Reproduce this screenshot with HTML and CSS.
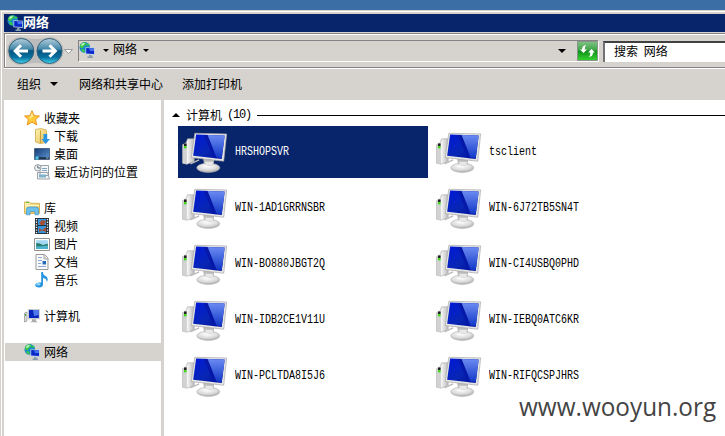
FILE: index.html
```
<!DOCTYPE html>
<html lang="zh-CN">
<head>
<meta charset="utf-8">
<title>网络</title>
<link rel="stylesheet" href="styles.css">
</head>
<body>
<svg class="defs" width="0" height="0">
  <defs>
    <linearGradient id="screen" x1="0" y1="0" x2="1" y2="1"><stop offset="0" stop-color="#0018d8"/><stop offset=".55" stop-color="#0826b4"/><stop offset="1" stop-color="#000c98"/></linearGradient>
    <linearGradient id="shine" x1="0" y1="0" x2="0" y2="1"><stop offset="0" stop-color="#6c8cf2"/><stop offset="1" stop-color="#1238c6"/></linearGradient>
    <linearGradient id="metal" x1="0" y1="0" x2="1" y2="0"><stop offset="0" stop-color="#b9b9b9"/><stop offset=".4" stop-color="#f4f4f4"/><stop offset="1" stop-color="#b4b4b4"/></linearGradient>
    <radialGradient id="foot" cx=".45" cy=".3" r=".7"><stop offset="0" stop-color="#fff"/><stop offset=".6" stop-color="#ddd"/><stop offset="1" stop-color="#aaa"/></radialGradient>
    <linearGradient id="orb" x1="0" y1="0" x2="0" y2="1"><stop offset="0" stop-color="#b4cedb"/><stop offset=".42" stop-color="#4488aa"/><stop offset=".5" stop-color="#075580"/><stop offset=".75" stop-color="#08709f"/><stop offset="1" stop-color="#45d5ef"/></linearGradient>
    <linearGradient id="gold" x1="0" y1="0" x2="1" y2="1"><stop offset="0" stop-color="#fff6b4"/><stop offset="1" stop-color="#e3b951"/></linearGradient>
    <linearGradient id="sky" x1="0" y1="0" x2="1" y2="1"><stop offset="0" stop-color="#183a72"/><stop offset="1" stop-color="#5a98d6"/></linearGradient>
    <linearGradient id="green" x1="0" y1="0" x2="0" y2="1"><stop offset="0" stop-color="#7fc585"/><stop offset=".45" stop-color="#3fa348"/><stop offset=".5" stop-color="#108f1c"/><stop offset="1" stop-color="#35d52f"/></linearGradient>
    <symbol id="pc" viewBox="0 0 140 126">
      <path d="M2 38 13 31 17 20 39 20 37 89 15 97 2 94Z" fill="url(#metal)" stroke="#aaa" stroke-width="2"/>
      <path d="M2 38 14 32 15 97 2 94Z" fill="#d2d2d2"/>
      <path d="M6 34h8v8H6z" fill="#222"/><path d="M6 42h8v7H6z" fill="#3edc18"/>
      <path d="M26 96 52 84" stroke="#bbb" stroke-width="4"/>
      <ellipse cx="80" cy="108" rx="35" ry="14" fill="url(#foot)" stroke="#b5b5b5" stroke-width="2"/>
      <path d="M64 80 98 84 96 99Q82 106 67 96Z" fill="#bbb"/>
      <path d="M70 90 94 90 93 101 73 100Z" fill="#e8e8e8"/>
      <path d="M39 3 136 5 127 88 28 77Z" fill="#e6e6e6" stroke="#a5a5a5" stroke-width="2"/>
      <path d="M43 7 130 10 121 81 34 71Z" fill="url(#screen)"/>
      <path d="M73 8 130 10 121 78 98 77Z" fill="url(#shine)"/>
      <path d="M67 8 78 8 106 79 96 78Z" fill="#0618a8"/>
    </symbol>
    <symbol id="network" viewBox="0 0 16 16">
      <circle cx="5.8" cy="5.4" r="5.3" fill="#168bc7"/>
      <path d="M1 3Q3 0 6 .3L8 2 5 4 4 6 1.5 6ZM7 4 11 3 9 1.2ZM2 7 5 7.6 6 10.4 3 9.5Z" fill="#3ccc44"/>
      <path d="M3 1.5 6 1 4.5 3.3 2 4Z" fill="#c4f2cc"/>
      <path d="M6.4 5.2 15.8 5.7V13L6.4 12.2Z" fill="#b9cfe6"/>
      <path d="M7.2 6 15 6.5V12L7.2 11.4Z" fill="#0826c8"/>
      <path d="M10 6.2 15 6.5V9L11 9.2Z" fill="#4470eb"/>
      <path d="M10 13h2.5v1.4H14V16H8.5v-1.4H10Z" fill="#899cac"/>
    </symbol>
    <symbol id="star" viewBox="0 0 16 16"><path d="M8 .7 10.2 5.7 15.5 6 11.5 9.6 12.8 15 8 12.1 3.2 15 4.4 9.6.5 6 5.8 5.7Z" fill="#ffc936" stroke="#e8952a"/><path d="M8 2.5 9.2 6.5 5 9.5 6.2 6.6Z" fill="#ffe894"/></symbol>
    <symbol id="download" viewBox="0 0 16 16"><path d="M1.5 1.5 7 .6 12.5 2V14.5L6 15.5 1.5 14Z" fill="url(#gold)" stroke="#d8b762"/><path d="M6.5 2.5V15" stroke="#c99d37"/><path d="M9.5 6h3.7v5H16l-4.3 5L7.5 11H9.5Z" fill="#2996e4"/></symbol>
    <symbol id="desktop" viewBox="0 0 16 16"><path d="M.5 2.5h15v11H.5z" fill="url(#sky)" stroke="#506685"/><path d="M1 11.2h14V13H1z" fill="#1d3148"/><circle cx="3" cy="12" r="1.8" fill="#48c5e8"/><path d="M12 12h2.5" stroke="#9db4ce"/></symbol>
    <symbol id="recent" viewBox="0 0 16 16"><path d="M6 1.5h8.5v10H6zM3.5 8.5h10l2 6.5h-12z" fill="#f4f6f7" stroke="#98a1a8"/><path d="M8 4.5h5M8 6.5h5" stroke="#82a5bf"/><path d="M5 10.5h7v3H5z" fill="#7eb0ca"/><circle cx="3.8" cy="3.8" r="3.2" fill="#eef1f3" stroke="#929ba2"/><path d="M3.8 1.6V4H6" fill="none" stroke="#596872"/></symbol>
    <symbol id="library" viewBox="0 0 16 16"><path d="M.5 3.5V2h5l1 1.3H15.5V13.5H.5Z" fill="url(#gold)" stroke="#d6b45b"/><path d="M2 2.3h3" stroke="#55ba43"/><path d="M1 5.5h14" stroke="#fff5c0"/><path d="M2.5 14.8V9.5Q2.5 7 5 7H12Q14.5 7 14.5 9.5V14.8H11V11.5H6V14.8Z" fill="#6bc0ec" stroke="#4296c6" stroke-width=".7"/></symbol>
    <symbol id="video" viewBox="0 0 16 16"><path d="M1 0h14v16H1z" fill="#26313a"/><path d="M4 1h8v6H4zM4 8h8v7H4z" fill="#3297df"/><path d="M5 5 8 2 12 3 10 7H7ZM5 10 8 12 12 9V14L8 12.5 5 14Z" fill="#a35039"/><path d="M2.5 1v15M13.5 1v15" stroke="#eee" stroke-width="1.3" stroke-dasharray="1.3 1.3"/></symbol>
    <symbol id="picture" viewBox="0 0 16 16"><path d="M.5 2.5h15v12H.5z" fill="#fff" stroke="#929292"/><path d="M2.2 4.2h11.6v8.6H2.2z" fill="#a6d8f5"/><path d="M2.2 7Q6 7 9 9L13.8 7.5V13H2.2Z" fill="#267f71"/><path d="M2.2 10.5 13.8 9.7V13H2.2Z" fill="#4eb3d1"/></symbol>
    <symbol id="document" viewBox="0 0 16 16"><path d="M2 .5h8.5l3.5 3.7V15.5H2z" fill="#fafafa" stroke="#999"/><path d="M10 .8V5h4" fill="#ddd" stroke="#aaa"/><path d="M4 3.5h4M4 6.5h4M4 9.5h3M4 12.5h8" stroke="#87a9d3"/><path d="M8.5 7H12v3.5H8.5z" fill="#236ab9"/></symbol>
    <symbol id="music" viewBox="0 0 16 16"><path d="M7.2 0H9Q9 3 12.5 4.5Q15 7.5 12.5 10Q13.2 6.5 9 6V12.5Q9 15.5 5.2 15.5Q1 15.5 1.2 12.6Q2.2 10 7.2 10.6Z" fill="#2795df"/><ellipse cx="4.3" cy="12.3" rx="2.2" ry="1.2" fill="#8fd6fa"/></symbol>
    <symbol id="computer" viewBox="0 0 16 16"><path d="M.5 5 3 4v9L.5 14Z" fill="#ddd" stroke="#999" stroke-width=".8"/><path d="M1 6h1v2H1z" fill="#37ad34"/><path d="M3.8 1h12v10.3h-12z" fill="#c9cbd1"/><path d="M5 2h9.8v8H5z" fill="#0625bd"/><path d="M9 2h5.8v5L10 8Z" fill="#5079ea"/><path d="M8 11.2h4V13l2 1.2H6L8 13Z" fill="#aaa"/></symbol>
  </defs>
</svg>
<div class="window">
  <header class="title"><svg class="i16"><use href="#network"/></svg><span>网络</span></header>
  <nav class="navbar">
    <svg class="orbs" viewBox="0 0 70 30">
      <path d="M14 1Q28 5 42.5 1A14 14 0 0 1 42.5 29Q28 25 14 29A14 14 0 0 1 14 1" fill="#bcbcbc"/>
      <g stroke="#315f78"><circle cx="14.3" cy="15" r="12.5" fill="url(#orb)"/><circle cx="42.5" cy="15" r="12.5" fill="url(#orb)"/></g>
      <path d="M21 15H8.5M14 9.3 8.2 15 14 20.7M35.5 15H48M42.5 9.3 48.3 15 42.5 20.7" fill="none" stroke="#fff" stroke-width="3"/>
      <path d="M57.5 13.5h8L61.5 17.5Z" fill="#fff" stroke="#888" stroke-width=".8"/>
    </svg>
    <div class="address">
      <svg class="i16"><use href="#network"/></svg><i class="arrow first"></i><span>网络</span><i class="arrow"></i><i class="arrow last"></i>
      <svg class="refresh" viewBox="0 0 21 20"><path d="M.5.5h20v19H.5z" fill="url(#green)" stroke="#8a948a"/><path d="M9 4Q5 4.500 5 8.500H3L6.500 12 10 8.500H7.800Q7.500 6 9 4ZM12 16Q16 15.500 16 11.500H18L14.500 8 11 11.500H13.300Q13.500 14 12 16Z" fill="#fff"/></svg>
    </div>
    <div class="search">搜索 网络</div>
  </nav>
  <div class="toolbar"><span class="organize">组织</span><i class="arrow big"></i><span class="center">网络和共享中心</span><span>添加打印机</span></div>
  <div class="body">
    <aside class="sidebar">
      <div class="row"><svg class="i16"><use href="#star"/></svg>收藏夹</div>
      <div class="row sub"><svg class="i16"><use href="#download"/></svg>下载</div>
      <div class="row sub"><svg class="i16"><use href="#desktop"/></svg>桌面</div>
      <div class="row sub"><svg class="i16"><use href="#recent"/></svg>最近访问的位置</div>
      <div class="row group"><svg class="i16"><use href="#library"/></svg>库</div>
      <div class="row sub"><svg class="i16"><use href="#video"/></svg>视频</div>
      <div class="row sub"><svg class="i16"><use href="#picture"/></svg>图片</div>
      <div class="row sub"><svg class="i16"><use href="#document"/></svg>文档</div>
      <div class="row sub"><svg class="i16"><use href="#music"/></svg>音乐</div>
      <div class="row group"><svg class="i16"><use href="#computer"/></svg>计算机</div>
      <div class="row group current"><svg class="i16"><use href="#network"/></svg>网络</div>
    </aside>
    <main class="content">
      <div class="heading"><i class="up"></i><span>计算机</span><span class="count">(10)</span><i class="rule"></i></div>
      <div class="grid">
        <div class="item selected"><svg class="pc"><use href="#pc"/></svg><span>HRSHOPSVR</span></div>
        <div class="item"><svg class="pc"><use href="#pc"/></svg><span>tsclient</span></div>
        <div class="item"><svg class="pc"><use href="#pc"/></svg><span>WIN-1AD1GRRNSBR</span></div>
        <div class="item"><svg class="pc"><use href="#pc"/></svg><span>WIN-6J72TB5SN4T</span></div>
        <div class="item"><svg class="pc"><use href="#pc"/></svg><span>WIN-BO880JBGT2Q</span></div>
        <div class="item"><svg class="pc"><use href="#pc"/></svg><span>WIN-CI4USBQ0PHD</span></div>
        <div class="item"><svg class="pc"><use href="#pc"/></svg><span>WIN-IDB2CE1V11U</span></div>
        <div class="item"><svg class="pc"><use href="#pc"/></svg><span>WIN-IEBQ0ATC6KR</span></div>
        <div class="item"><svg class="pc"><use href="#pc"/></svg><span>WIN-PCLTDA8I5J6</span></div>
        <div class="item"><svg class="pc"><use href="#pc"/></svg><span>WIN-RIFQCSPJHRS</span></div>
      </div>
    </main>
  </div>
</div>
<div class="watermark">www.wooyun.org</div>
</body>
</html>
```
FILE: styles.css
```
* { box-sizing: border-box; }
body { margin: 0; width: 725px; height: 436px; overflow: hidden; background: #3a6ea5; padding-top: 10px; font: 12px/18px "Noto Sans CJK SC", sans-serif; color: #000; position: relative; }
.defs { position: absolute; }
svg { display: block; flex: none; }
.i16 { width: 16px; height: 16px; }
.window { height: 426px; background: #d6d3ce; border-top: 1px solid #d6d3ce; border-left: 1px solid #d6d3ce; box-shadow: inset 1px 1px #fff; padding: 3px 0 0 3px; display: flex; flex-direction: column; }
.title { height: 18px; background: #08246b; color: #fff; font-weight: bold; font-size: 13px; display: flex; align-items: center; padding-left: 3px; flex: none; }
.title span { line-height: 16px; margin-top: -2px; }
.navbar { height: 35px; margin-top: 1px; border: solid #848284; border-width: 1px 0 1px 1px; box-shadow: inset 1px 1px #fff, 0 1px #fff; display: flex; align-items: center; padding: 1px 0 0 2px; flex: none; }
.orbs { width: 70px; height: 30px; }
.address { width: 521px; height: 22px; margin-left: 1px; border: 1px solid #848284; border-right-color: #fff; border-bottom-color: #fff; display: flex; align-items: center; }
.address span { margin: -4px 0 0 -1px; }
.address .i16 { margin-top: -3px; }
.arrow { width: 0; height: 0; border: 3px solid transparent; border-top-color: #000; border-bottom: 0; margin: -1px 0 0 6px; }
.first { margin: -1px 5px 0 8px; }
.last { border-width: 4px 4px 0; margin-left: auto; margin-right: 11px; }
.refresh { width: 21px; height: 20px; }
.search { flex: 1; height: 21px; margin-left: 4px; background: #fff; border: solid #424142; border-width: 2px 0 0 2px; border-left-color: #737173; box-shadow: 0 1px #d6d3ce; line-height: 16px; padding-left: 9px; word-spacing: 3px; }
.toolbar { height: 32px; flex: none; display: flex; align-items: center; padding: 0 0 1px 13px; }
.big { border-width: 4px 4px 0; margin: 0 21px 0 9px; }
.center { margin-right: 19px; }
.body { flex: 1; min-height: 0; display: flex; background: #fff; }
.sidebar { width: 160px; border-right: 3px solid #d6d3ce; padding-top: 9px; flex: none; }
.row { height: 18px; display: flex; align-items: center; gap: 4px; padding-left: 20px; white-space: nowrap; }
.sub { padding-left: 30px; }
.group { margin-top: 18px; }
.current { background: #d6d3ce; margin-left: 1px; padding-left: 19px; }
.content { flex: 1; padding-left: 8px; }
.heading { display: flex; align-items: center; height: 18px; margin-top: 6px; }
.up { width: 0; height: 0; border: 4px solid transparent; border-bottom-color: #000; border-top: 0; margin-right: 6px; }
.count { font-family: "Liberation Mono", monospace; font-size: 12px; letter-spacing: -1.2px; margin-left: 5px; }
.rule { flex: 1; height: 1px; background: #000; margin: 1px 0 0 6px; }
.grid { display: grid; grid-template-columns: 250px 250px; column-gap: 4px; row-gap: 4px; margin: 2px 0 0 6px; }
.item { height: 52px; display: flex; align-items: center; padding-left: 4px; }
.item span { font-family: "Liberation Mono", monospace; font-size: 12px; transform: scaleX(.8333); transform-origin: 0 50%; margin-left: 7px; }
.pc { width: 46px; height: 42px; margin-top: 1px; }
.selected { background: #08246b; color: #fff; }
.watermark { position: absolute; left: 519px; top: 389px; font: 26px/34px "Open Sans", sans-serif; color: #444; white-space: nowrap; transform: scaleX(.935); transform-origin: 0 50%; }
```
